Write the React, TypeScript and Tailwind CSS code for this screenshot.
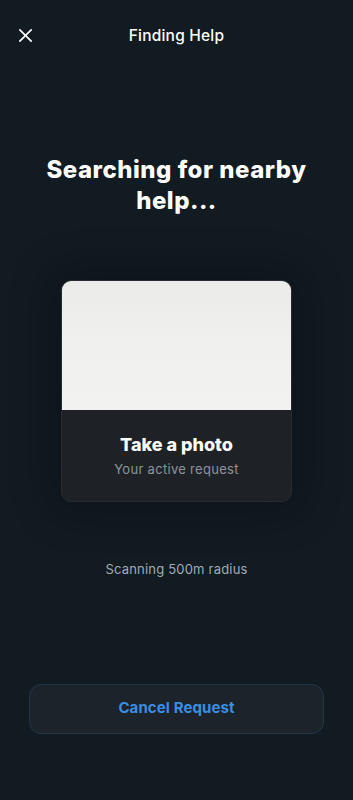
import React from 'react';

const App: React.FC = () => {
  return (
    <div className="bg-[#121a22] min-h-[800px] w-full flex flex-col font-['Inter','Liberation_Sans',sans-serif] text-white">
      {/* Header */}
      <div className="relative h-[72px] flex items-center justify-center">
        <button className="absolute left-[17px] top-[27px] p-0 text-white" aria-label="Close">
          <svg width="17" height="17" viewBox="0 0 24 24" fill="none" stroke="currentColor" strokeWidth="2.4" strokeLinecap="round">
            <path d="M4 4l16 16M20 4L4 20" />
          </svg>
        </button>
        <h2 className="text-[15.5px] font-medium tracking-[0.2px]">Finding Help</h2>
      </div>

      {/* Title */}
      <h1 className="mt-[82px] px-[40px] text-center text-[24px] leading-[31px] font-extrabold tracking-[0.5px]">
        Searching for nearby help...
      </h1>

      {/* Card */}
      <div className="mt-[64px] flex justify-center">
        <div className="w-[231px] rounded-[10px] overflow-hidden border border-[#272c32] bg-[#1e2227] shadow-[0_0_40px_10px_rgba(0,0,0,0.25)]">
          <div className="h-[129px] bg-gradient-to-b from-[#ebebea] via-[#f0f0ef] to-[#f2f2f0]" />
          <div className="flex flex-col items-center pt-[23px] pb-[23px]">
            <div className="text-[18px] leading-[24px] font-extrabold">Take a photo</div>
            <div className="mt-[3px] text-[13px] leading-[18px] text-[#8d949c] tracking-[0.3px]">Your active request</div>
          </div>
        </div>
      </div>

      <p className="mt-[58px] text-center text-[13px] text-[#a3abb4] tracking-[0.2px]">Scanning 500m radius</p>

      {/* Cancel */}
      <div className="mt-[104px] px-[29px]">
        <button className="w-full h-[50px] rounded-[12px] bg-[#1c232b] border border-[#243548] text-[#3a8ee0] text-[15px] font-bold tracking-[0.1px]">
          Cancel Request
        </button>
      </div>
    </div>
  );
};

export default App;
